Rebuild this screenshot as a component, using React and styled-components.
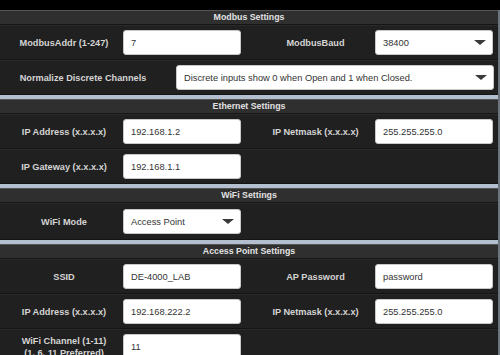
import React from 'react';
import styled, { createGlobalStyle } from 'styled-components';

const Global = createGlobalStyle`
  html, body {
    margin: 0;
    padding: 0;
    background: #000;
    overflow: hidden;
  }
  body {
    font-family: "Liberation Sans", Arial, Helvetica, sans-serif;
  }
`;

const Page = styled.div`
  width: 500px;
  height: 355px;
  padding-top: 10px;
  box-sizing: border-box;
  background: #000;
  overflow: hidden;
`;

const Panel = styled.div`
  background: #1f1f1f;
  border-right: 2px solid #6c7480;
`;

const Section = styled.section`
  border-bottom: ${p => (p.$last ? 'none' : '4px solid #b3bfcf')};
  box-shadow: ${p => (p.$last ? 'none' : '0 1px 0 #3b4658')};
`;

const Header = styled.div`
  height: 13px;
  line-height: 13px;
  border-top: 1px solid #555;
  border-bottom: 1px solid #151515;
  background: #2f2f2f;
  color: #e2e2e2;
  font-size: 8.8px;
  font-weight: bold;
  text-align: center;
`;

const Row = styled.div`
  display: flex;
  align-items: center;
  height: ${p => p.$h || 33}px;
  border-top: 1px solid #2a2a2a;
  border-bottom: 1px solid #141414;
  background: #202020;
`;

const Half = styled.div`
  display: flex;
  align-items: center;
  gap: ${p => p.$gap || 0}px;
  width: ${p => (p.$wide ? 'auto' : '250px')};
  padding-left: ${p => p.$pl || 5}px;
  box-sizing: border-box;
`;

const Label = styled.div`
  width: ${p => p.$w || 118}px;
  flex-shrink: 0;
  text-align: center;
  color: #d4d4d4;
  font-size: 9.2px;
  font-weight: bold;
  line-height: 12px;
`;

const Field = styled.div`
  position: relative;
  display: flex;
  align-items: center;
  width: ${p => p.$w || 118}px;
  height: 25px;
  box-sizing: border-box;
  padding: 0 7px;
  background: #fff;
  border: 1px solid #c9c9c9;
  border-radius: 3px;
  color: #333;
  font-size: 9.3px;
  white-space: nowrap;
`;

const Arrow = styled.span`
  position: absolute;
  right: 6px;
  top: 9px;
  width: 0;
  height: 0;
  border-left: 6px solid transparent;
  border-right: 6px solid transparent;
  border-top: 5px solid #3a3a3a;
`;

const Input = ({ value, w }) => <Field $w={w}>{value}</Field>;
const Select = ({ value, w }) => (
  <Field $w={w}>
    {value}
    <Arrow />
  </Field>
);

export default function App() {
  return (
    <Page>
      <Global />
      <Panel>
        <Section>
          <Header>Modbus Settings</Header>
          <Row>
            <Half>
              <Label>ModbusAddr (1-247)</Label>
              <Input value="7" />
            </Half>
            <Half $pl={7}>
              <Label $w={119}>ModbusBaud</Label>
              <Select value="38400" />
            </Half>
          </Row>
          <Row>
            <Half $wide $gap={15}>
              <Label $w={156}>Normalize Discrete Channels</Label>
              <Select w={318} value="Discrete inputs show 0 when Open and 1 when Closed." />
            </Half>
          </Row>
        </Section>
        <Section>
          <Header>Ethernet Settings</Header>
          <Row>
            <Half>
              <Label>IP Address (x.x.x.x)</Label>
              <Input value="192.168.1.2" />
            </Half>
            <Half $pl={7}>
              <Label $w={119}>IP Netmask (x.x.x.x)</Label>
              <Input value="255.255.255.0" />
            </Half>
          </Row>
          <Row>
            <Half>
              <Label>IP Gateway (x.x.x.x)</Label>
              <Input value="192.168.1.1" />
            </Half>
          </Row>
        </Section>
        <Section>
          <Header>WiFi Settings</Header>
          <Row $h={35}>
            <Half>
              <Label>WiFi Mode</Label>
              <Select value="Access Point" />
            </Half>
          </Row>
        </Section>
        <Section $last>
          <Header>Access Point Settings</Header>
          <Row>
            <Half>
              <Label>SSID</Label>
              <Input value="DE-4000_LAB" />
            </Half>
            <Half $pl={7}>
              <Label $w={119}>AP Password</Label>
              <Input value="password" />
            </Half>
          </Row>
          <Row>
            <Half>
              <Label>IP Address (x.x.x.x)</Label>
              <Input value="192.168.222.2" />
            </Half>
            <Half $pl={7}>
              <Label $w={119}>IP Netmask (x.x.x.x)</Label>
              <Input value="255.255.255.0" />
            </Half>
          </Row>
          <Row>
            <Half>
              <Label>WiFi Channel (1-11)<br />(1, 6, 11 Preferred)</Label>
              <Input value="11" />
            </Half>
          </Row>
        </Section>
      </Panel>
    </Page>
  );
}
